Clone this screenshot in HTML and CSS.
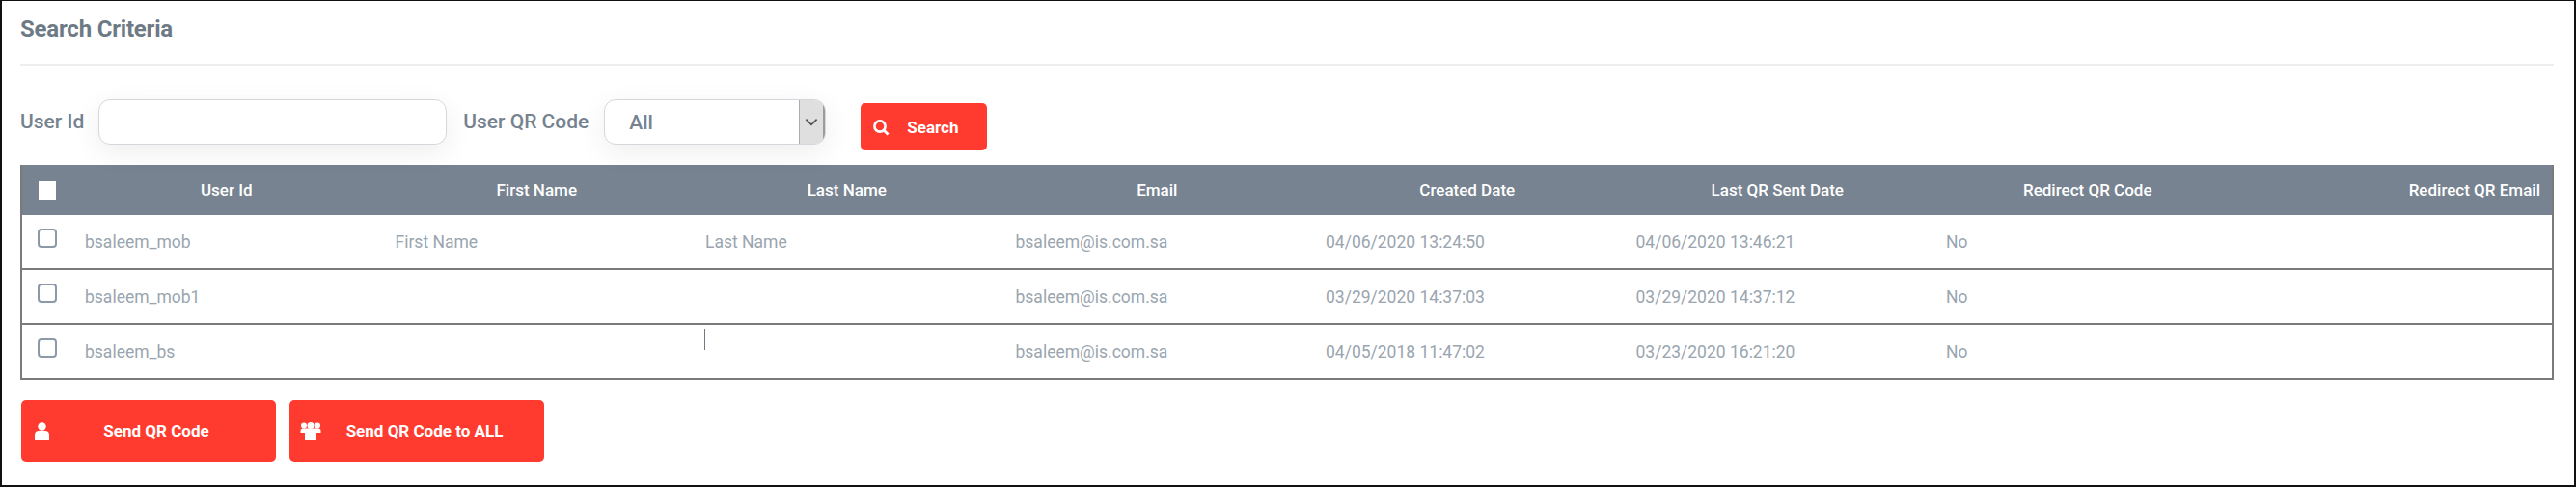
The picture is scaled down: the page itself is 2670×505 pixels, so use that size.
FILE: index.html
```html
<!DOCTYPE html>
<html lang="en">
<head>
    <meta charset="UTF-8">
    <meta name="viewport" content="width=device-width, initial-scale=1.0">
    <title>Search Criteria</title>
    <link rel="stylesheet" href="styles.css">
</head>
<body>
    <div class="panel">
        <h1 class="panelTitle">Search Criteria</h1>

        <form class="searchForm">
            <label for="userId" class="fieldLabel">User Id</label>
            <input type="text" id="userId" class="inputField">
            <label for="qrCode" class="fieldLabel qrLabel">User QR Code</label>
            <div class="selectBox">
                <select id="qrCode" class="selectField">
                    <option>All</option>
                </select>
                <span class="selectArrow">
                    <svg width="14" height="9" viewBox="0 0 12 8"><path d="M1 1.5l5 5 5-5" fill="none" stroke="#555" stroke-width="1.6"/></svg>
                </span>
            </div>
            <button type="button" class="redButton searchButton">
                <svg class="btnIcon" width="18" height="18" viewBox="0 0 18 18"><circle cx="8" cy="8" r="5.6" fill="none" stroke="#fff" stroke-width="2.6"/><path d="M12 12l4.5 4.5" stroke="#fff" stroke-width="2.8"/></svg>
                <span>Search</span>
            </button>
        </form>

        <table class="userTable">
            <thead>
                <tr>
                    <th class="checkCol"><input type="checkbox" class="checkBox headCheck"></th>
                    <th>User Id</th>
                    <th>First Name</th>
                    <th>Last Name</th>
                    <th>Email</th>
                    <th>Created Date</th>
                    <th>Last QR Sent Date</th>
                    <th>Redirect QR Code</th>
                    <th class="lastHead">Redirect QR Email</th>
                </tr>
            </thead>
            <tbody>
                <tr>
                    <td class="checkCol"><input type="checkbox" class="checkBox"></td>
                    <td>bsaleem_mob</td>
                    <td>First Name</td>
                    <td>Last Name</td>
                    <td>bsaleem@is.com.sa</td>
                    <td>04/06/2020 13:24:50</td>
                    <td>04/06/2020 13:46:21</td>
                    <td>No</td>
                    <td></td>
                </tr>
                <tr>
                    <td class="checkCol"><input type="checkbox" class="checkBox"></td>
                    <td>bsaleem_mob1</td>
                    <td></td>
                    <td></td>
                    <td>bsaleem@is.com.sa</td>
                    <td>03/29/2020 14:37:03</td>
                    <td>03/29/2020 14:37:12</td>
                    <td>No</td>
                    <td></td>
                </tr>
                <tr>
                    <td class="checkCol"><input type="checkbox" class="checkBox"></td>
                    <td>bsaleem_bs</td>
                    <td></td>
                    <td class="cursorCell"><span class="textCursor"></span></td>
                    <td>bsaleem@is.com.sa</td>
                    <td>04/05/2018 11:47:02</td>
                    <td>03/23/2020 16:21:20</td>
                    <td>No</td>
                    <td></td>
                </tr>
            </tbody>
        </table>

        <div class="actions">
            <button type="button" class="redButton sendButton">
                <svg class="sendIcon" width="22" height="18" viewBox="0 0 22 18"><circle cx="10.500" cy="4.500" r="4.200" fill="#fff"/><path d="M3 18v-5c0-2.500 2-4 4-4h7c2 0 4 1.500 4 4v5z" fill="#fff"/></svg>
                <span class="sendText">Send QR Code</span>
            </button>
            <button type="button" class="redButton sendButton">
                <svg class="sendIcon" width="22" height="18" viewBox="0 0 22 18"><circle cx="4" cy="3.500" r="3" fill="#fff"/><circle cx="18" cy="3.500" r="3" fill="#fff"/><circle cx="11" cy="3.500" r="3.500" fill="#fff"/><path d="M0.500 11V9c0-1.500 1-2.500 2.500-2.500h16c1.500 0 2.500 1 2.500 2.500v2z" fill="#fff"/><path d="M5 18v-7c0-2 1.500-3 3-3h6c1.500 0 3 1 3 3v7z" fill="#fff"/></svg>
                <span class="sendText">Send QR Code to ALL</span>
            </button>
        </div>
    </div>
</body>
</html>
```

FILE: styles.css
```css
/* styles.css */
html, body {
    margin: 0;
    padding: 0;
    background-color: #fff;
}

body {
    font-family: Roboto, 'Liberation Sans', sans-serif;
    color: #76838f;
}

.panel {
    box-sizing: border-box;
    height: 505px;
    padding: 0 21px 0 19px;
    border: 2px solid #111;
    border-width: 1px 2px 2px 2px;
}

.panelTitle {
    margin: 0;
    padding: 14px 0 21px;
    font-size: 24px;
    line-height: 30px;
    font-weight: 700;
    letter-spacing: -0.2px;
    color: #6d7a86;
    border-bottom: 2px solid #eceef0;
}

.searchForm {
    display: flex;
    align-items: flex-start;
    height: 103px;
    padding-top: 35px;
    box-sizing: border-box;
}

.fieldLabel {
    font-size: 21px;
    font-weight: 500;
    line-height: 47px;
    color: #76838f;
}

.inputField {
    box-sizing: border-box;
    width: 361px;
    height: 47px;
    margin-left: 15px;
    border: 1px solid #d4d8dc;
    border-radius: 12px;
    background-color: #fff;
    box-shadow: 0 8px 30px rgba(0, 0, 0, 0.07);
}

.qrLabel {
    margin-left: 17px;
}

.selectBox {
    display: flex;
    box-sizing: border-box;
    width: 230px;
    height: 47px;
    margin-left: 16px;
    border: 1px solid #d4d8dc;
    border-radius: 12px;
    overflow: hidden;
    background-color: #fff;
    box-shadow: 0 8px 30px rgba(0, 0, 0, 0.07);
}

.selectField {
    flex: 1;
    min-width: 0;
    padding: 0 0 0 25px;
    border: none;
    outline: none;
    appearance: none;
    background: transparent;
    font-family: inherit;
    font-size: 21px;
    font-weight: 500;
    color: #76838f;
}

.selectArrow {
    display: flex;
    align-items: center;
    justify-content: center;
    width: 27px;
    background-color: #dfdfdf;
    border-left: 1px solid #a9adb0;
    border-right: 2px solid #9a9da0;
    box-sizing: border-box;
}

.redButton {
    display: flex;
    align-items: center;
    border: none;
    border-radius: 5px;
    background-color: #ff3b30;
    color: #fff;
    font-family: inherit;
    font-weight: 700;
    cursor: pointer;
}

.searchButton {
    box-sizing: border-box;
    width: 131px;
    height: 49px;
    margin: 4px 0 0 36px;
    padding: 0 0 0 12px;
    font-size: 17px;
}

.searchButton span {
    margin-left: 18px;
}

.userTable {
    width: 100%;
    border-collapse: collapse;
    table-layout: fixed;
    font-size: 17.5px;
    border: 2px solid #7d7a7c;
    border-top: none;
}

.userTable th {
    height: 52px;
    padding: 0;
    background-color: #778391;
    color: #fff;
    font-size: 17px;
    font-weight: 500;
    text-align: center;
}

.userTable td {
    height: 55px;
    padding: 0 0 0 14px;
    border-bottom: 2px solid #7d7a7c;
    color: #9aa5af;
}

.userTable .checkCol {
    width: 52px;
    padding: 0 0 8px 16px;
    box-sizing: border-box;
    text-align: left;
}

.userTable th.checkCol {
    padding: 0 0 0 17px;
}

.userTable .lastHead {
    text-align: right;
    padding-right: 12px;
}

.checkBox {
    box-sizing: border-box;
    display: block;
    width: 20px;
    height: 20px;
    margin: 0;
    appearance: none;
    background-color: #fff;
    border: 2px solid #8d99a8;
    border-radius: 4px;
}

.headCheck {
    width: 18px;
    height: 19px;
    border-color: #fff;
    border-radius: 0;
}

.cursorCell {
    position: relative;
}

.textCursor {
    position: absolute;
    left: 13px;
    top: 4px;
    width: 1px;
    height: 22px;
    background-color: #6f7a85;
}

.actions {
    display: flex;
    gap: 14px;
    padding: 21px 0 0 1px;
}

.sendButton {
    box-sizing: border-box;
    width: 264px;
    height: 64px;
    padding: 0 17px 0 11px;
    font-size: 17px;
}

.sendIcon {
    flex: none;
}

.sendText {
    flex: 1;
    text-align: center;
}
```
